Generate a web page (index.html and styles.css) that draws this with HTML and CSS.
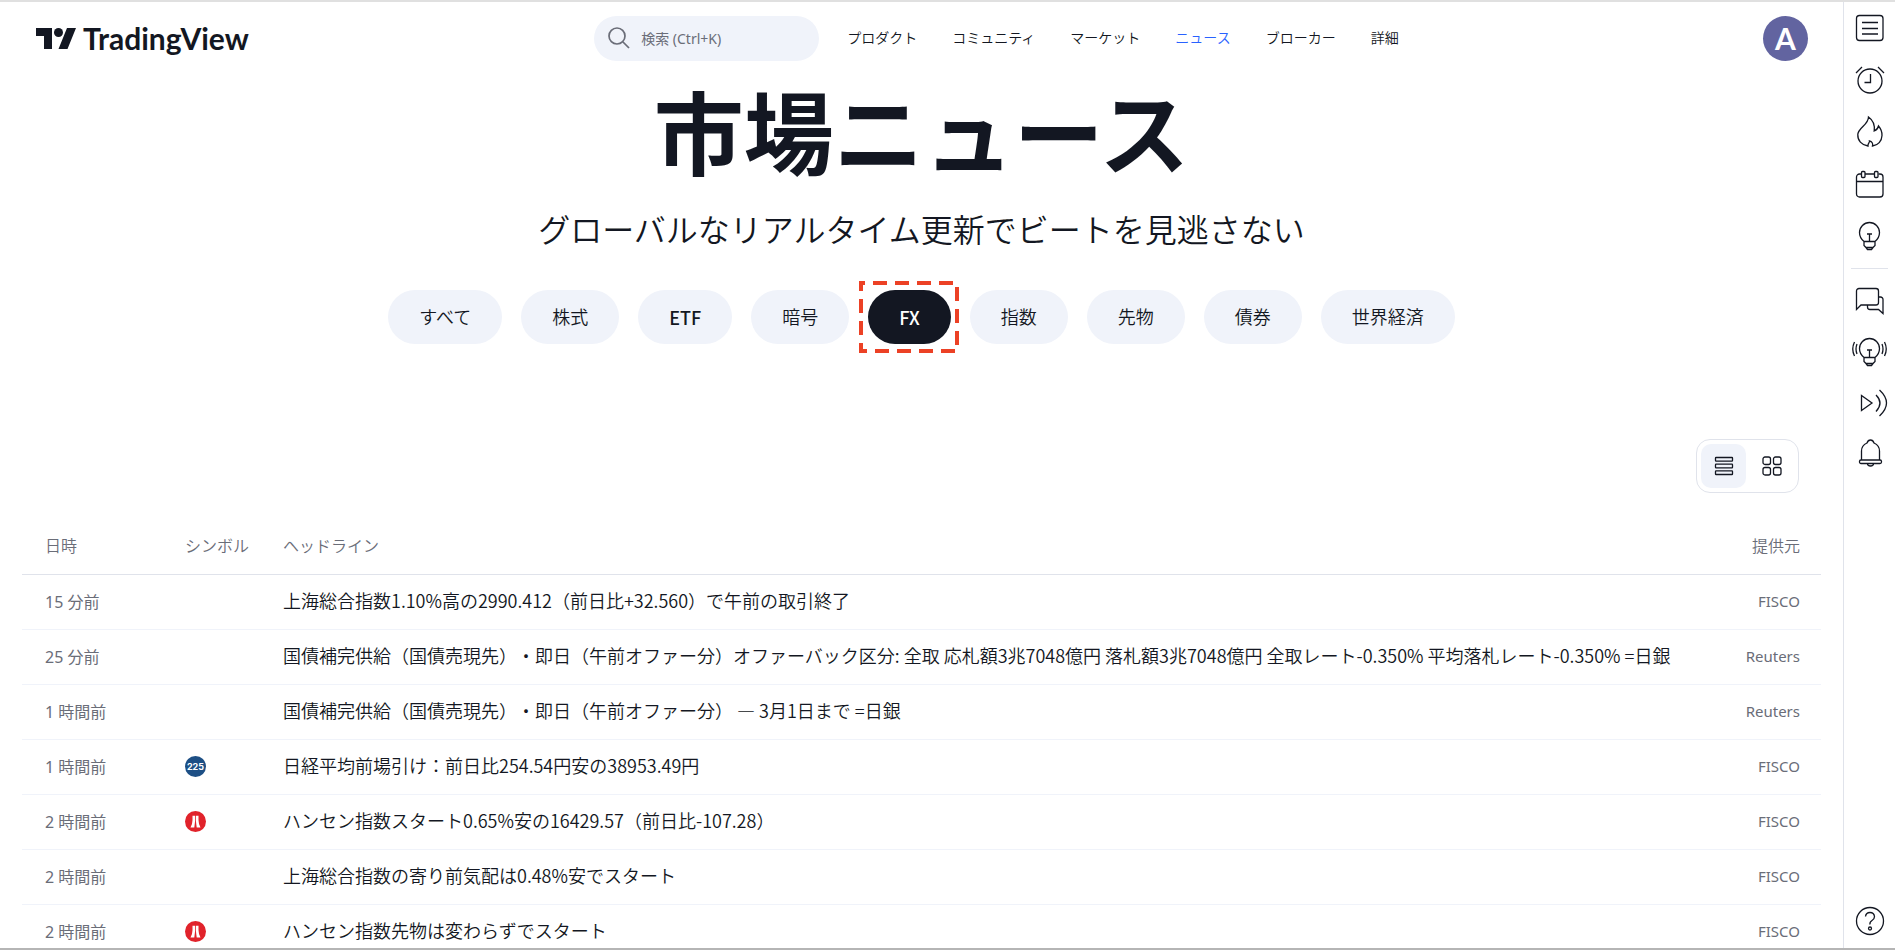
FILE: index.html
```html
<!DOCTYPE html>
<html lang="ja">
<head>
<meta charset="utf-8">
<title>市場ニュース — TradingView</title>
<link rel="stylesheet" href="styles.css">
</head>
<body>
<div class="app">
  <div class="page">
    <header class="header">
      <a class="logo" href="#" aria-label="TradingView">
        <svg class="logo-mark" viewBox="0 0 40 21" aria-hidden="true"><path d="M0 0h16v21H8V8H0zM31 0h9l-8.500 21h-9z"/><circle cx="22.500" cy="4.500" r="4.500"/></svg>
        <span class="logo-text">TradingView</span>
      </a>
      <div class="header-center">
        <label class="search">
          <svg class="search-icon" viewBox="0 0 22 22" aria-hidden="true"><circle cx="9" cy="9" r="8"/><path d="M15 15l6 6"/></svg>
          <input class="search-input" type="text" placeholder="検索 (Ctrl+K)" aria-label="検索">
        </label>
        <nav class="nav">
          <a class="nav-link" href="#">プロダクト</a>
          <a class="nav-link" href="#">コミュニティ</a>
          <a class="nav-link" href="#">マーケット</a>
          <a class="nav-link nav-link-active" href="#">ニュース</a>
          <a class="nav-link" href="#">ブローカー</a>
          <a class="nav-link" href="#">詳細</a>
        </nav>
      </div>
      <button class="avatar" type="button">A</button>
    </header>
    <main class="main">
      <h1 class="title">市場ニュース</h1>
      <p class="subtitle">グローバルなリアルタイム更新でビートを見逃さない</p>
      <div class="chips">
        <button class="chip" type="button">すべて</button>
        <button class="chip" type="button">株式</button>
        <button class="chip chip-latin" type="button">ETF</button>
        <button class="chip" type="button">暗号</button>
        <button class="chip chip-latin chip-active" type="button">FX<svg class="marker" aria-hidden="true"><rect class="marker-box" x="2" y="2" width="96" height="68"/></svg></button>
        <button class="chip" type="button">指数</button>
        <button class="chip" type="button">先物</button>
        <button class="chip" type="button">債券</button>
        <button class="chip" type="button">世界経済</button>
      </div>
      <div class="view-bar">
        <div class="view-switch">
          <button class="view view-on" type="button" aria-label="リスト"><svg class="view-icon" viewBox="0 0 20 20"><rect x="1.500" y="1.500" width="17" height="3.600" rx=".6"/><rect x="1.500" y="8.200" width="17" height="3.600" rx=".6"/><rect x="1.500" y="14.900" width="17" height="3.600" rx=".6"/></svg></button>
          <button class="view" type="button" aria-label="グリッド"><svg class="view-icon" viewBox="0 0 20 20"><rect x="1" y="1" width="7.500" height="7.500" rx="2"/><rect x="11.500" y="1" width="7.500" height="7.500" rx="2"/><rect x="1" y="11.500" width="7.500" height="7.500" rx="2"/><rect x="11.500" y="11.500" width="7.500" height="7.500" rx="2"/></svg></button>
        </div>
      </div>
      <table class="news">
        <thead>
          <tr><th class="col-time">日時</th><th class="col-symbol">シンボル</th><th>ヘッドライン</th><th class="col-source">提供元</th></tr>
        </thead>
        <tbody>
          <tr><td class="time">15 分前</td><td></td><td class="headline">上海総合指数1.10%高の2990.412（前日比+32.560）で午前の取引終了</td><td class="source">FISCO</td></tr>
          <tr><td class="time">25 分前</td><td></td><td class="headline">国債補完供給（国債売現先）・即日（午前オファー分）オファーバック区分: 全取 応札額3兆7048億円 落札額3兆7048億円 全取レート-0.350% 平均落札レート-0.350% =日銀</td><td class="source">Reuters</td></tr>
          <tr><td class="time">1 時間前</td><td></td><td class="headline">国債補完供給（国債売現先）・即日（午前オファー分） ― 3月1日まで =日銀</td><td class="source">Reuters</td></tr>
          <tr><td class="time">1 時間前</td><td><span class="symbol symbol-nikkei">225</span></td><td class="headline">日経平均前場引け：前日比254.54円安の38953.49円</td><td class="source">FISCO</td></tr>
          <tr><td class="time">2 時間前</td><td><span class="symbol symbol-hsi"><svg class="hsi" viewBox="0 0 21 21"><path d="M7.500 4.800h2.600V10L9.300 16.500H5.500Q7.500 13 7.500 9zM10.900 4.800h2.600V9q0 4 2 7.500H11.700L10.900 10z"/></svg></span></td><td class="headline">ハンセン指数スタート0.65%安の16429.57（前日比-107.28）</td><td class="source">FISCO</td></tr>
          <tr><td class="time">2 時間前</td><td></td><td class="headline">上海総合指数の寄り前気配は0.48%安でスタート</td><td class="source">FISCO</td></tr>
          <tr><td class="time">2 時間前</td><td><span class="symbol symbol-hsi"><svg class="hsi" viewBox="0 0 21 21"><path d="M7.500 4.800h2.600V10L9.300 16.500H5.500Q7.500 13 7.500 9zM10.900 4.800h2.600V9q0 4 2 7.500H11.700L10.900 10z"/></svg></span></td><td class="headline">ハンセン指数先物は変わらずでスタート</td><td class="source">FISCO</td></tr>
        </tbody>
      </table>
    </main>
  </div>
  <aside class="rail">
    <button class="tool" type="button" aria-label="ウォッチリスト"><svg class="icon" viewBox="0 0 36 36"><rect x="4.500" y="5.500" width="26.500" height="25" rx="3"/><path d="M10 12.500h16M10 18.500h16M10 24h16"/></svg></button>
    <button class="tool" type="button" aria-label="アラート"><svg class="icon" viewBox="0 0 36 36"><circle cx="18" cy="19" r="12"/><path d="M18.500 12v8.500h-6M4 11l6-6M26 5l6 6"/></svg></button>
    <button class="tool" type="button" aria-label="ホットリスト"><svg class="icon" viewBox="0 0 36 36"><path d="M16 32C9.500 31 5.500 26.500 5.800 20.500C6.200 13.500 16.500 11 16.500 3C21.500 6.500 23 11 22.200 17C24.500 16 26 14.500 26.500 12C29 15 30.200 18 30 21.500C29.800 27 26 31.500 20.500 32C21.200 29.500 20 27.500 17.500 27C18 28.500 15.500 29.500 16 32z"/></svg></button>
    <button class="tool" type="button" aria-label="カレンダー"><svg class="icon" viewBox="0 0 36 36"><path d="M9.500 8H7.500a3 3 0 0 0-3 3v17a3 3 0 0 0 3 3H28a3 3 0 0 0 3-3V11a3 3 0 0 0-3-3h-1.500M13 8h9.500M4.500 15.500H31"/><rect x="9.500" y="5.500" width="3.500" height="6" rx="1"/><rect x="22.500" y="5.500" width="3.500" height="6" rx="1"/></svg></button>
    <button class="tool" type="button" aria-label="アイデア"><svg class="icon" viewBox="0 0 36 36"><path d="M12 23.500C9 21 7.500 18.500 7.500 14.500a10 10 0 0 1 20 0c0 4-1.500 6.500-4.500 9zM12 23.500v4l2 2h7l2-2v-4M14 29.500l1.500 2h4l1.500-2M17.500 23V16M15 16h5"/></svg></button>
    <hr class="rail-line">
    <button class="tool" type="button" aria-label="チャット"><svg class="icon" viewBox="0 0 36 36"><path d="M4.500 26.500V8a2.500 2.500 0 0 1 2.500-2.500h17A2.500 2.500 0 0 1 26.500 8v11.500A2.500 2.500 0 0 1 24 22H9zM26.500 14h2a2.500 2.500 0 0 1 2.500 2.500v14l-4.500-4H18a2.500 2.500 0 0 1-2.500-2.500v-2"/></svg></button>
    <button class="tool" type="button" aria-label="アイデアストリーム"><svg class="icon" viewBox="0 0 36 36"><path d="M12 23.500C9 21 7.500 18.500 7.500 14.500a10 10 0 0 1 20 0c0 4-1.500 6.500-4.500 9zM12 23.500v4l2 2h7l2-2v-4M14 29.500l1.500 2h4l1.500-2M17.500 23V16M15 16h5M5 10q-2 5 0 10M2.500 8q-3.500 7 0 14M30 10q2 5 0 10M32.500 8q3.500 7 0 14"/></svg></button>
    <button class="tool" type="button" aria-label="ストリーム"><svg class="icon" viewBox="0 0 36 36"><path d="M9.500 10.500v15l10.500-7.500zM24 10q8 8 0 16.500M27.500 5q14 13 0 26"/></svg></button>
    <button class="tool" type="button" aria-label="通知"><svg class="icon" viewBox="0 0 36 36"><path d="M9.500 24V15q0-5.500 5.500-8c.8-2.500 2-3 3.500-3s2.700.5 3.500 3q5.500 2.500 5.500 8v9M15.500 27.500q0 2.500 3 2.500t3-2.500"/><rect x="7.500" y="24" width="22" height="3.500" rx="1.500"/></svg></button>
    <button class="tool tool-help" type="button" aria-label="ヘルプ"><svg class="icon" viewBox="0 0 36 36"><circle cx="18" cy="18" r="13.500"/><path d="M13.500 13.500q.5-4 4.500-4t4.500 4q0 2.500-2.500 4t-2 4"/><circle cx="18" cy="25.500" r="1.500"/></svg></button>
  </aside>
</div>
</body>
</html>
```
FILE: styles.css
```css
* { box-sizing: border-box; }
body { margin: 0; color: #131722; background: #fff; font-family: "Noto Sans", "Noto Sans CJK JP", sans-serif; font-weight: 350; text-spacing-trim: space-all; }
button, input { font: inherit; color: inherit; }
button { border: 0; padding: 0; background: none; cursor: pointer; }
a { color: inherit; text-decoration: none; }
svg { display: block; }

.app { display: flex; height: 100vh; overflow: hidden; border-top: 2px solid #e0e0e0; border-bottom: 2px solid #b5b5b5; }
.page { flex: 1; min-width: 0; }

.header { display: grid; grid-template-columns: 15fr auto 11fr; align-items: center; height: 72px; padding: 0 35px 0 36px; }
.logo { display: flex; align-items: center; gap: 7px; }
.logo-mark { width: 40px; height: 21px; fill: #131722; }
.logo-text { font: 700 30px/36px Lato, sans-serif; }
.header-center { display: flex; align-items: center; gap: 28px; }
.search { display: flex; align-items: center; gap: 9px; width: 225px; height: 45px; padding: 0 14px; border-radius: 23px; background: #f0f3fa; }
.search-icon { flex: none; width: 22px; height: 22px; fill: none; stroke: #6a6d78; stroke-width: 1.7; }
.search-input { width: 100%; border: 0; outline: 0; background: none; font-size: 14px; font-weight: 400; }
.search-input::placeholder { color: #6a6d78; opacity: 1; }
.nav { display: flex; gap: 35px; font-size: 14px; line-height: 24px; }
.nav-link { white-space: nowrap; }
.nav-link-active { color: #2962ff; }
.avatar { justify-self: end; width: 45px; height: 45px; border-radius: 50%; background: #6264a0; color: #fff; font: 700 30px/45px Lato, sans-serif; }

.title { margin: 0; text-align: center; font-size: 90px; line-height: 118px; font-weight: 700; }
.subtitle { margin: 0; padding-top: 14px; text-align: center; font-size: 32px; line-height: 48px; }
.chips { display: flex; justify-content: center; gap: 19px; padding-top: 36px; }
.chip { position: relative; height: 54px; padding: 0 31px 2px; border-radius: 27px; background: #f0f3fa; font-size: 18px; white-space: nowrap; }
.chip-latin { padding-bottom: 0; font-weight: 500; font-family: "Noto Sans CJK JP", sans-serif; }
.chip-active { background: #131722; color: #fff; }
.marker { position: absolute; left: -9px; top: -9px; width: 100px; height: 72px; }
.marker-box { fill: none; stroke: #ec4125; stroke-width: 4; stroke-dasharray: 14 8; stroke-dashoffset: 10; }

.view-bar { display: flex; justify-content: flex-end; padding: 95px 44px 0; }
.view-switch { display: flex; gap: 3px; padding: 4px; border: 1px solid #e0e3eb; border-radius: 14px; }
.view { display: grid; place-items: center; width: 45px; height: 44px; border-radius: 10px; }
.view-on { background: #f0f3fa; }
.view-icon { width: 20px; height: 20px; fill: none; stroke: #131722; stroke-width: 1.3; }

.news { width: calc(100% - 44px); margin: 26px 22px 0; border-collapse: collapse; table-layout: fixed; color: #6a6d78; font-size: 15px; }
.news th { height: 55px; padding: 0 0 2px 23px; text-align: left; font-weight: inherit; font-size: 16px; border-bottom: 1px solid #e0e3eb; }
.news td { height: 55px; padding: 0 0 0 23px; border-bottom: 1px solid #f0f3fa; white-space: nowrap; }
.news .col-time { width: 140px; }
.news .col-symbol { width: 98px; }
.news .col-source { width: 120px; padding: 0 21px 2px 0; text-align: right; }
.news .time { padding-bottom: 2px; font-size: 16px; font-weight: 400; }
.news .headline { padding-bottom: 4px; color: #131722; font-size: 18px; font-family: "Noto Sans CJK JP", sans-serif; }
.news .source { padding: 0 21px 2px 0; text-align: right; font-weight: 400; }
.symbol { display: grid; place-items: center; width: 21px; height: 21px; border-radius: 50%; color: #fff; font: 700 9px/21px Inter, sans-serif; }
.symbol-nikkei { background: #1d4f85; }
.symbol-hsi { background: #e1232b; }
.hsi { width: 21px; height: 21px; fill: #fff; }

.rail { display: flex; flex-direction: column; align-items: center; width: 52px; border-left: 1px solid #e0e3eb; }
.tool { display: grid; place-items: center; width: 52px; height: 52px; flex: none; }
.icon { width: 36px; height: 36px; fill: none; stroke: #131722; stroke-width: 1.3; }
.rail-line { width: 37px; margin: 6px 0; border: 0; border-top: 1px solid #e0e3eb; }
.rail-line ~ .tool { height: 51px; }
.tool-help { margin: auto 0 2px; }
```
